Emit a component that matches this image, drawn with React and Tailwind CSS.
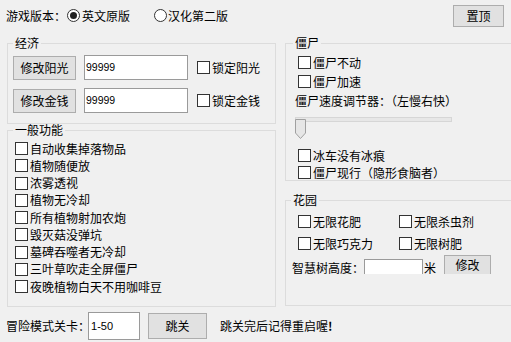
import React from "react";

function Box() {
  return <span className="block w-[13px] h-[13px] border border-[#333] bg-white shrink-0" />;
}

function Check({ label, className = "" }) {
  return (
    <div className={"flex items-center " + className}>
      <Box />
      <span className="ml-[2px] leading-[16px] whitespace-nowrap">{label}</span>
    </div>
  );
}

function Radio({ checked }) {
  return (
    <span className="w-[13px] h-[13px] rounded-full border border-[#333] bg-white flex items-center justify-center shrink-0">
      {checked && <span className="w-[7px] h-[7px] rounded-full bg-[#222]" />}
    </span>
  );
}

function Btn({ children, className = "" }) {
  return (
    <div className={"flex items-center justify-center bg-[#e1e1e1] border border-[#adadad] shrink-0 " + className}>
      {children}
    </div>
  );
}

export default function App() {
  const general = [
    "自动收集掉落物品",
    "植物随便放",
    "浓雾透视",
    "植物无冷却",
    "所有植物射加农炮",
    "毁灭菇没弹坑",
    "墓碑吞噬者无冷却",
    "三叶草吹走全屏僵尸",
    "夜晚植物白天不用咖啡豆",
  ];
  return (
    <div className="w-[511px] h-[342px] overflow-hidden bg-[#f0f0f0] text-[12px] text-black font-['Noto_Sans_CJK_SC',sans-serif] flex flex-col">
      {/* top row */}
      <div className="h-[31px] flex items-center pl-[6px] shrink-0">
        <span className="whitespace-nowrap">游戏版本：</span>
        <span className="ml-[1px]"><Radio checked /></span>
        <span className="ml-[2px] whitespace-nowrap">英文原版</span>
        <span className="ml-[24px]"><Radio /></span>
        <span className="ml-[1px] whitespace-nowrap">汉化第二版</span>
        <Btn className="ml-auto mr-[7px] w-[51px] h-[22px]">置顶</Btn>
      </div>

      {/* main */}
      <div className="mt-[6px] flex pl-[7px] gap-[9px] shrink-0">
        {/* left column */}
        <div className="w-[269px] flex flex-col shrink-0">
          <fieldset className="h-[87px] border border-[#dcdcdc] pl-[5px] pt-[6px] min-w-0">
            <legend className="px-[2px] leading-[12px]">经济</legend>
            <div className="flex items-center h-[25px]">
              <Btn className="w-[63px] h-[24px]">修改阳光</Btn>
              <div className="ml-[8px] w-[104px] h-[25px] border border-[#9a9a9a] bg-white flex items-center pl-[1px] font-['Liberation_Sans',sans-serif] text-[10.5px]">99999</div>
              <Check className="ml-[9px]" label="锁定阳光" />
            </div>
            <div className="flex items-center h-[25px] mt-[8px]">
              <Btn className="w-[63px] h-[24px]">修改金钱</Btn>
              <div className="ml-[8px] w-[104px] h-[25px] border border-[#9a9a9a] bg-white flex items-center pl-[1px] font-['Liberation_Sans',sans-serif] text-[10.5px]">99999</div>
              <Check className="ml-[9px]" label="锁定金钱" />
            </div>
          </fieldset>
          <fieldset className="h-[183px] border border-[#dcdcdc] pl-[7px] pt-[4px] min-w-0">
            <legend className="px-[2px] -ml-[2px] leading-[12px]">一般功能</legend>
            {general.map((g) => (
              <Check key={g} className="h-[17.25px]" label={g} />
            ))}
          </fieldset>
        </div>

        {/* right column */}
        <div className="w-[240px] flex flex-col shrink-0">
          <fieldset className="h-[144px] border border-[#dcdcdc] pl-[12px] pt-[4px] min-w-0">
            <legend className="px-[2px] -ml-[5px] leading-[12px]">僵尸</legend>
            <Check className="h-[19px]" label="僵尸不动" />
            <Check className="h-[19px]" label="僵尸加速" />
            <div className="h-[19px] flex items-center -ml-[3px] whitespace-nowrap">僵尸速度调节器：（左慢右快）</div>
            <div className="h-[30px] relative -ml-[3px]">
              <div className="mt-[7px] w-[157px] h-[5px] border border-[#d6d6d6] bg-[#e7e7e7]" />
              <svg className="absolute left-0 top-[2px]" width="11" height="20" viewBox="0 0 11 20">
                <path d="M0.5 0.5 H10.5 V14 L5.5 19.5 L0.5 14 Z" fill="#e6e6e6" stroke="#a0a0a0" strokeWidth="1" />
              </svg>
            </div>
            <Check className="h-[17px]" label="冰车没有冰痕" />
            <Check className="h-[17px]" label="僵尸现行（隐形食脑者）" />
          </fieldset>
          <fieldset className="mt-[13px] h-[112px] border border-[#dcdcdc] pl-[12px] pt-[6px] min-w-0">
            <legend className="px-[2px] -ml-[7px] leading-[12px]">花园</legend>
            <div className="grid grid-cols-[101px_101px] h-[19px]">
              <Check label="无限花肥" />
              <Check label="无限杀虫剂" />
            </div>
            <div className="grid grid-cols-[101px_101px] h-[19px] mt-[3px]">
              <Check label="无限巧克力" />
              <Check label="无限树肥" />
            </div>
            <div className="h-[23px] flex items-start -ml-[6px]">
              <span className="mt-[8px] leading-[14px] whitespace-nowrap">智慧树高度：</span>
              <div className="mt-[6px] h-[15px] overflow-hidden shrink-0">
                <div className="w-[59px] h-[22px] border border-[#9a9a9a] bg-white" />
              </div>
              <span className="mt-[8px] ml-[1px] leading-[14px]">米</span>
              <div className="mt-[2px] ml-[8px] h-[19px] overflow-hidden shrink-0">
                <Btn className="w-[47px] h-[23px] items-start pt-[2px] leading-[14px]">修改</Btn>
              </div>
            </div>
          </fieldset>
        </div>
      </div>

      {/* bottom row */}
      <div className="mt-[5px] h-[28px] flex items-center pl-[6px] shrink-0">
        <span className="whitespace-nowrap">冒险模式关卡：</span>
        <div className="-ml-[2px] w-[52px] h-[28px] border border-[#9a9a9a] bg-white flex items-center pl-[2px] font-['Liberation_Sans',sans-serif] text-[11px]">1-50</div>
        <Btn className="ml-[8px] w-[59px] h-[26px]">跳关</Btn>
        <span className="ml-[13px] whitespace-nowrap">
          跳关完后记得重启喔<b className="font-bold">!</b>
        </span>
      </div>
    </div>
  );
}
